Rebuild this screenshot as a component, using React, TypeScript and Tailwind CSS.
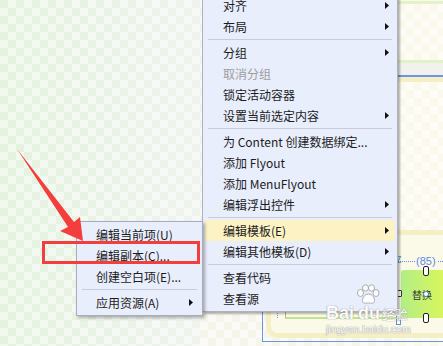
import clsx from 'clsx'

type Item = { label: string; arrow?: boolean; disabled?: boolean; active?: boolean } | 'sep'

const mainItems: Item[] = [
  { label: '对齐', arrow: true },
  { label: '布局', arrow: true },
  'sep',
  { label: '分组', arrow: true },
  { label: '取消分组', disabled: true },
  { label: '锁定活动容器' },
  { label: '设置当前选定内容', arrow: true },
  'sep',
  { label: '为 Content 创建数据绑定...' },
  { label: '添加 Flyout' },
  { label: '添加 MenuFlyout' },
  { label: '编辑浮出控件', arrow: true },
  'sep',
  { label: '编辑模板(E)', arrow: true, active: true },
  { label: '编辑其他模板(D)', arrow: true },
  'sep',
  { label: '查看代码' },
  { label: '查看源' },
]

const subItems: Item[] = [
  { label: '编辑当前项(U)' },
  { label: '编辑副本(C)...' },
  { label: '创建空白项(E)...' },
  'sep',
  { label: '应用资源(A)', arrow: true },
]

const checker =
  'bg-[image:repeating-conic-gradient(rgba(255,255,255,0.5)_0_25%,transparent_0_50%)] bg-[length:16px_16px]'

function SubArrow() {
  return (
    <svg width="4" height="7" viewBox="0 0 4 7" className="shrink-0">
      <path d="M0 0L4 3.5L0 7Z" fill="#111" />
    </svg>
  )
}

function MenuRows({ items, pl, pr }: { items: Item[]; pl: string; pr: string }) {
  return (
    <>
      {items.map((it, i) =>
        it === 'sep' ? (
          <div key={i} className="flex h-[5px] items-center px-[3px]">
            <div className="h-px w-full bg-[#c9cbd9]" />
          </div>
        ) : (
          <div
            key={i}
            className={clsx(
              'flex h-[21px] items-center justify-between whitespace-nowrap text-[12px] leading-none',
              pl,
              pr,
              it.active && 'bg-[#fcf2c4]',
              it.disabled ? 'text-[#9d9d9d]' : 'text-[#1c1c1c]'
            )}
          >
            <span>{it.label}</span>
            {it.arrow && <SubArrow />}
          </div>
        )
      )}
    </>
  )
}

export default function App() {
  return (
    <div className="relative h-[346px] w-[443px] overflow-hidden bg-[linear-gradient(90deg,#e3f2de,#eef3ec_40%,#f4f4f2_80%)] font-['Microsoft_YaHei','Noto_Sans_CJK_SC',sans-serif]">
      {/* design surface: checker on the left, canvas strip on the right */}
      <div className={clsx('absolute inset-0 grid grid-cols-[398px_1fr] grid-rows-[250px_1fr]', checker)}>
        <div />
        <div className="row-span-2 flex flex-col bg-[#faf9ec]">
          <div className="h-px" />
          <div className="h-[3px] bg-[#e3f2c9]" />
          <div className={clsx('h-[56px]', checker)} />
          <div className="h-[3px] bg-[#e1f2c5]" />
          <div className="h-[12px] bg-[#f1f1ee]" />
          <div className="h-[2px] bg-[#6897e6]" />
          <div className="h-[5px] bg-[#f6efc6]" />
          <div className={clsx('flex-1', checker)} />
        </div>
        <div className="ml-[200px] bg-[#f6f5ec]">
          <div className={clsx('h-full w-full', checker)} />
        </div>
      </div>

      {/* ── Designer controls at bottom right ─── */}
      <div className="absolute left-[262px] top-[240px] right-[-4px] bottom-[4px] border border-[#6c96e2]" />
      <div className="absolute left-[266px] top-[230px] right-[-20px] bottom-[8px] rounded-[12px] border-[5px] border-[#f5efc6] bg-[#fbfae8]" />
      <div className="absolute left-[285px] top-[240px] h-[79px] w-[116px] border-b-2 border-l border-[#b4b4a6] border-b-[#bfe391] bg-[#fcfbe3]" />
      <div className="absolute left-[277px] top-[310px] h-[8px] border-l border-dotted border-[#7d9ad0]" />

      {/* selected button with its adorners */}
      <div className="absolute left-[396px] top-[255px] right-0 h-[70px]">
        <div className="flex h-full items-start">
          <div className="mt-[3px] h-[66px] w-px bg-[#5d8de0]" />
          <div className="flex flex-1 flex-col">
            <div className="relative h-[16px] border-b border-dotted border-[#5d8de0] mb-[8px] mt-[-9px]">
              <span className="absolute left-[18px] top-[8px] bg-[#faf9ec] px-px font-['Liberation_Sans',sans-serif] text-[11px] leading-[14px] text-[#5d8de0]">
                (85)
              </span>
            </div>
            <div className="ml-[4px] flex h-[48px] items-center justify-center rounded-tl-[3px] bg-[linear-gradient(90deg,#b2ee86,#d8f55c)] text-[10px] text-[#333]">
              替换
            </div>
          </div>
        </div>
        <div className="absolute left-0 top-0 text-[9px] leading-none text-[#5d8de0]">Z</div>
        <div className="absolute left-[27px] top-[11px] h-[10px] w-[6px] rounded-[2px] border-[1.5px] border-[#222] bg-white" />
        <div className="absolute left-[27px] top-[58px] h-[10px] w-[6px] rounded-[2px] border-[1.5px] border-[#222] bg-white" />
        <div className="absolute left-0 top-[35px] h-[7px] w-[6px] rounded-[1px] border-[1.5px] border-[#333] bg-white" />
        <div className="absolute left-[27px] top-[36px] h-[6px] w-[6px] rounded-full border border-[#4a7fd8] bg-white" />
        <div className="absolute left-0 top-[65px] h-[5px] w-[5px] border border-[#5d8de0] bg-white" />
      </div>

      {/* ── Main context menu ─── */}
      <div className="absolute left-[202px] top-[-8px] w-[196px] border border-[#aeb1c2] bg-[#e9eefc] px-[2px] py-[2px] shadow-[2px_2px_2px_rgba(0,0,0,0.3)]">
        <MenuRows items={mainItems} pl="pl-[18px]" pr="pr-[6px]" />
      </div>

      {/* ── Sub menu ─── */}
      <div className="absolute left-[76px] top-[221px] w-[127px] border border-[#a9acbc] bg-[#e9eefc] px-[2px] py-[2px] shadow-[2px_2px_3px_rgba(0,0,0,0.3)]">
        <MenuRows items={subItems} pl="pl-[17px]" pr="pr-[7px]" />
      </div>

      {/* ── Annotation: red box and arrow ─── */}
      <div className="absolute left-[42px] top-[241px] h-[23px] w-[158px] border-[3px] border-[#f43d3d]" />
      <svg className="pointer-events-none absolute left-0 top-0" width="443" height="346" viewBox="0 0 443 346">
        <polygon points="17,149 74,222 80,217 83,241 60,231 68,227" fill="#f43d3d" />
      </svg>

      {/* Baidu watermark, over everything */}
      <div className="pointer-events-none absolute left-[326px] top-[284px] flex flex-col items-start text-white opacity-90 [text-shadow:0_0_1px_#8a8a8a,0_0_1px_#8a8a8a]">
        <svg width="24" height="21" viewBox="0 0 24 21" className="ml-[30px]">
          <g fill="#fff" stroke="#a5a5a5" strokeWidth="1">
            <ellipse cx="4.5" cy="9" rx="3" ry="3.5" />
            <ellipse cx="9.5" cy="4" rx="3" ry="3.2" />
            <ellipse cx="15.5" cy="4" rx="3" ry="3.2" />
            <ellipse cx="20" cy="9" rx="3" ry="3.5" />
            <path d="M12.5 10C8 10 6 15 6.5 17.5C7 20 10 19 12.5 19S18 20 18.5 17.5C19 15 17 10 12.5 10Z" />
          </g>
        </svg>
        <div className="flex items-baseline font-['Liberation_Sans',sans-serif] text-[18px] font-bold leading-[16px]">
          <span>Bai</span>
          <span className="ml-[4px]">du</span>
          <span className="ml-[2px] font-['Noto_Sans_CJK_SC',sans-serif] text-[13px] font-normal">经验</span>
        </div>
        <div className="mt-[2px] font-['Liberation_Sans',sans-serif] text-[10.5px] leading-[10px]">jingyan.baidu.com</div>
      </div>
    </div>
  )
}
